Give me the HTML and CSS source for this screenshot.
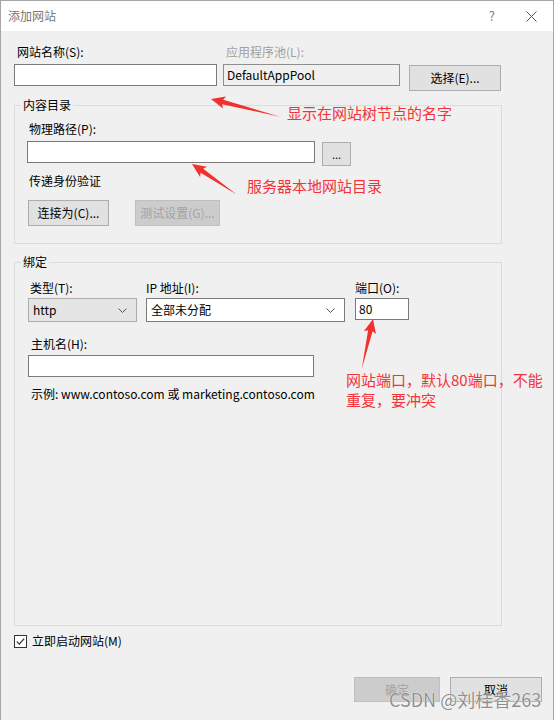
FILE: index.html
```html
<!DOCTYPE html>
<html lang="zh-CN">
<head>
<meta charset="utf-8">
<title>添加网站</title>
<link rel="stylesheet" href="styles.css">
</head>
<body>
<div class="window">
  <div class="titlebar">
    <span class="title">添加网站</span>
    <span class="help">?</span>
    <svg class="close" width="11" height="11" viewBox="0 0 11 11"><path d="M0.5 0.5 L10.5 10.5 M10.5 0.5 L0.5 10.5" stroke="#555" stroke-width="1" fill="none"/></svg>
  </div>
  <div class="content">
    <div class="top-grid">
      <div class="lbl name-lbl">网站名称(S):</div>
      <div class="lbl disabled pool-lbl">应用程序池(L):</div>
      <div></div>
      <div class="textbox name-box"></div>
      <div class="textbox pool-box">DefaultAppPool</div>
      <div class="btn select-btn">选择(E)...</div>
    </div>

    <fieldset class="group content-group">
      <legend>内容目录</legend>
      <div class="group-body content-body">
        <div class="lbl">物理路径(P):</div>
        <div class="path-row">
          <div class="textbox path-box"></div>
          <div class="btn browse-btn">...</div>
        </div>
        <div class="lbl pass-lbl">传递身份验证</div>
        <div class="btn-row">
          <div class="btn connect-btn">连接为(C)...</div>
          <div class="btn disabled-btn test-btn">测试设置(G)...</div>
        </div>
      </div>
    </fieldset>

    <fieldset class="group bind-group">
      <legend>绑定</legend>
      <div class="group-body bind-body">
        <div class="bind-grid">
          <div class="lbl type-lbl">类型(T):</div>
          <div class="lbl">IP 地址(I):</div>
          <div class="lbl">端口(O):</div>
          <div class="select type-select">
            <span>http</span>
            <svg class="chev" width="9" height="5" viewBox="0 0 9 5"><polyline points="0.5,0.5 4.5,4.5 8.5,0.5" fill="none" stroke="#555" stroke-width="1"/></svg>
          </div>
          <div class="select ip-select">
            <span>全部未分配</span>
            <svg class="chev" width="9" height="5" viewBox="0 0 9 5"><polyline points="0.5,0.5 4.5,4.5 8.5,0.5" fill="none" stroke="#555" stroke-width="1"/></svg>
          </div>
          <div class="textbox port-box">80</div>
        </div>
        <div class="lbl host-lbl">主机名(H):</div>
        <div class="textbox host-box"></div>
        <div class="lbl example">示例: www.contoso.com 或 marketing.contoso.com</div>
      </div>
    </fieldset>

    <div class="check-row">
      <svg class="checkbox" width="13" height="13" viewBox="0 0 13 13"><rect x="0.5" y="0.5" width="12" height="12" fill="#fff" stroke="#333"/><polyline points="2.8,6.6 5.3,9.1 10.2,3.6" fill="none" stroke="#333" stroke-width="1.3"/></svg>
      <span class="lbl">立即启动网站(M)</span>
    </div>

    <div class="dialog-buttons">
      <div class="btn disabled-btn ok-btn">确定</div>
      <div class="btn cancel-btn">取消</div>
    </div>
  </div>
</div>

<div class="annotations">
  <svg class="arrows" width="556" height="720" viewBox="0 0 556 720">
    <g fill="#f2302e">
      <polygon transform="translate(211,99) rotate(194.4)" points="-72,0 -12,-2.3 -14,-6.2 0,0 -14,6.2 -12,2.3"/>
      <polygon transform="translate(192,164) rotate(214.3)" points="-54,0 -12,-2.3 -14,-6.2 0,0 -14,6.2 -12,2.3"/>
      <polygon transform="translate(373,319) rotate(-77.3)" points="-51,0 -12,-2.3 -14,-6.2 0,0 -14,6.2 -12,2.3"/>
    </g>
  </svg>
  <div class="note note-name">显示在网站树节点的名字</div>
  <div class="note note-dir">服务器本地网站目录</div>
  <div class="note note-port">网站端口，默认80端口，不能<br>重复，要冲突</div>
  <div class="watermark">CSDN @刘桂香263</div>
</div>
</body>
</html>
```

FILE: styles.css
```css
* {
  box-sizing: border-box;
}

html, body {
  margin: 0;
  padding: 0;
  background: #ffffff;
}

body {
  position: relative;
  width: 556px;
  height: 720px;
  overflow: hidden;
  font-family: "Noto Sans CJK SC", "Noto Sans", sans-serif;
  font-size: 12px;
  line-height: 16px;
  color: #000;
}

.window {
  width: 554px;
  height: 720px;
  background: #f0f0f0;
  border: 1px solid #a6a6a6;
  border-bottom: none;
  display: flex;
  flex-direction: column;
}

.titlebar {
  height: 30px;
  background: #ffffff;
  display: flex;
  align-items: center;
  padding: 0 16px 0 7px;
  flex: none;
}

.title {
  flex: 1;
  color: #777;
  font-size: 12px;
}

.help {
  color: #808080;
  font-size: 13px;
  margin-right: 31px;
}

.close {
  display: block;
}

.content {
  padding: 0 0 0 13px;
  display: flex;
  flex-direction: column;
}

.lbl {
  height: 16px;
  line-height: 16px;
  white-space: nowrap;
}

.disabled {
  color: #a0a0a0;
}

.top-grid {
  margin-top: 13px;
  display: grid;
  grid-template-columns: 203px 192px 92px;
  grid-template-rows: 16px auto;
  row-gap: 4px;
  align-items: start;
}

.name-lbl {
  padding-left: 3px;
}

.pool-lbl {
  padding-left: 9px;
}

.textbox {
  background: #fff;
  border: 1px solid #7a7a7a;
  height: 22px;
  line-height: 20px;
  padding-left: 3px;
  white-space: nowrap;
}

.name-box {
  width: 203px;
}

.pool-box {
  margin-left: 6px;
  width: 177px;
  background: #f0f0f0;
  border-color: #8e8e8e;
}

.btn {
  background: #e1e1e1;
  border: 1px solid #adadad;
  display: flex;
  align-items: center;
  justify-content: center;
  white-space: nowrap;
  color: #000;
}

.select-btn {
  margin-top: 1px;
  width: 92px;
  height: 26px;
}

.group {
  margin: 0;
  padding: 0;
  border: 1px solid #dcdcdc;
  width: 488px;
  min-width: 0;
}

.group legend {
  margin-left: 6px;
  padding: 0 2px;
  line-height: 16px;
  height: 16px;
  font-size: 12px;
}

.content-group {
  margin-top: 6px;
}

.content-body {
  padding: 8px 0 17px 12px;
}

.content-body > .lbl {
  padding-left: 2px;
}

.path-row {
  margin-top: 4px;
  display: flex;
  align-items: flex-start;
  gap: 7px;
}

.path-box {
  width: 288px;
}

.browse-btn {
  margin-top: 1px;
  width: 29px;
  height: 24px;
  font-size: 11px;
}

.pass-lbl {
  margin-top: 7px;
}

.btn-row {
  margin-top: 11px;
  display: flex;
  gap: 26px;
  padding-left: 1px;
}

.connect-btn {
  width: 81px;
  height: 26px;
}

.disabled-btn {
  background: #cccccc;
  border-color: #bfbfbf;
  color: #a3a3a3;
}

.test-btn {
  width: 85px;
  height: 26px;
}

.bind-group {
  margin-top: 10px;
}

.bind-body {
  padding: 10px 0 223px 12px;
}

.bind-grid {
  display: grid;
  grid-template-columns: 119px 209px 54px;
  grid-template-rows: 16px auto;
  row-gap: 2px;
  align-items: start;
}

.type-lbl {
  padding-left: 3px;
}

.select {
  height: 24px;
  display: flex;
  align-items: center;
  justify-content: space-between;
  padding: 0 9px 0 4px;
}

.type-select {
  margin-left: 1px;
  width: 109px;
  background: #e5e5e5;
  border: 1px solid #acacac;
}

.ip-select {
  width: 199px;
  background: #fff;
  border: 1px solid #7a7a7a;
}

.chev {
  display: block;
}

.port-box {
  width: 54px;
}

.host-lbl {
  margin-top: 14px;
  padding-left: 4px;
}

.host-box {
  margin-top: 3px;
  margin-left: 1px;
  width: 286px;
}

.example {
  margin-top: 9px;
  padding-left: 4px;
}

.check-row {
  margin-top: 7px;
  display: flex;
  align-items: center;
  gap: 5px;
  height: 16px;
}

.checkbox {
  display: block;
}

.dialog-buttons {
  margin-top: 28px;
  display: flex;
  justify-content: flex-end;
  gap: 10px;
  padding-right: 11px;
}

.ok-btn {
  width: 86px;
  height: 25px;
}

.cancel-btn {
  width: 92px;
  height: 25px;
}

.annotations {
  position: absolute;
  left: 0;
  top: 0;
  width: 556px;
  height: 720px;
  pointer-events: none;
}

.arrows {
  position: absolute;
  left: 0;
  top: 0;
}

.note {
  position: absolute;
  color: #f2333a;
  font-size: 15px;
  line-height: 20px;
  white-space: nowrap;
}

.note-name {
  left: 287px;
  top: 103px;
}

.note-dir {
  left: 247px;
  top: 176px;
}

.note-port {
  left: 346px;
  top: 370px;
}

.watermark {
  position: absolute;
  left: 389px;
  top: 690px;
  font-size: 18px;
  line-height: 18px;
  color: #8f8f8f;
  white-space: nowrap;
  text-shadow: 0 0 1px #fff, 0 0 1px #fff;
}
```
